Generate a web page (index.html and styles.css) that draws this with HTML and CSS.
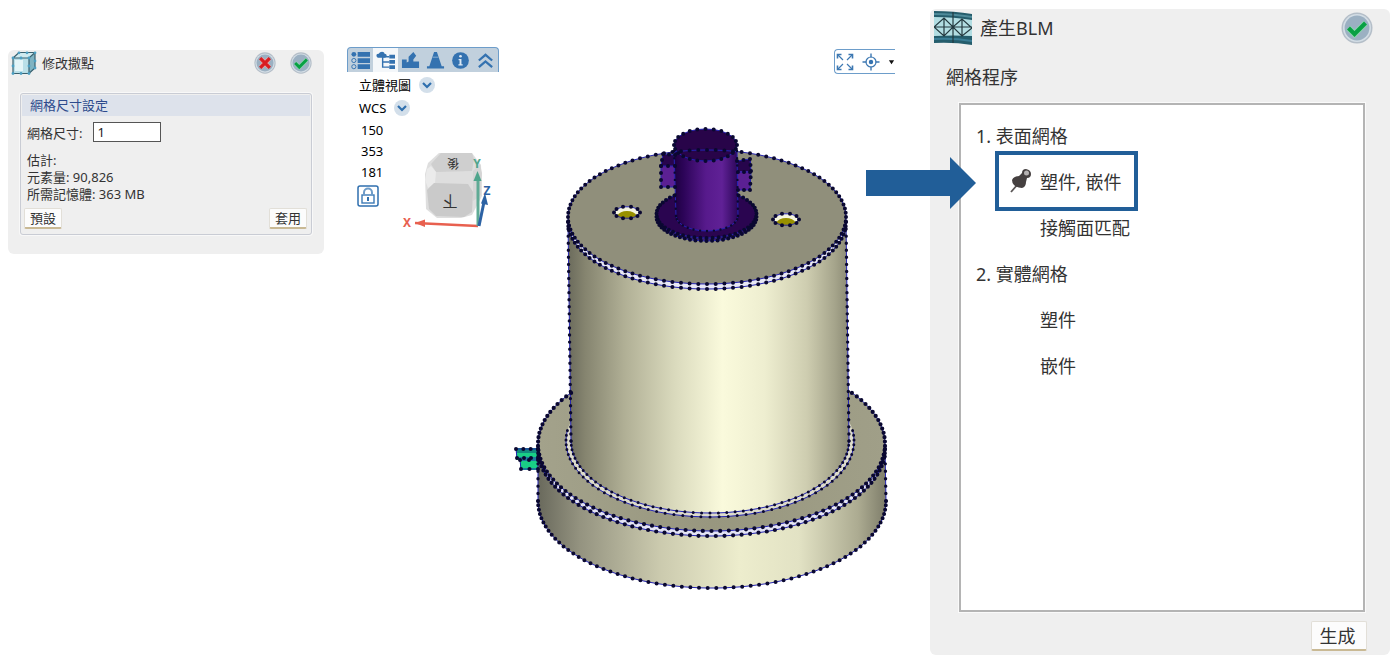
FILE: index.html
```html
<!DOCTYPE html>
<html lang="zh-Hant">
<head>
<meta charset="utf-8">
<title>產生BLM</title>
<link rel="stylesheet" href="styles.css">
</head>
<body>
<svg class="defs" aria-hidden="true">
  <defs>
    <symbol id="disc" viewBox="0 0 32 32">
      <circle cx="16" cy="16" r="15.5" fill="#b4bec8"/>
      <circle cx="16" cy="16" r="14" fill="#d3dde5"/>
      <circle cx="16" cy="16" r="12.4" fill="#9bb0c2"/>
    </symbol>
    <symbol id="ok" viewBox="0 0 32 32">
      <use href="#disc"/>
      <path d="M7.500 16l6 6 11-11" fill="none" stroke="#8fd8b0" stroke-width="6"/>
      <path d="M7.500 16l6 6 11-11" fill="none" stroke="#08a044" stroke-width="4.200"/>
    </symbol>
    <symbol id="cancel" viewBox="0 0 32 32">
      <use href="#disc"/>
      <path d="M10 10l12 12M22 10l-12 12" stroke="#eda5a5" stroke-width="6.500"/>
      <path d="M9 9l14 14M23 9l-14 14" stroke="#d91c22" stroke-width="4.800"/>
    </symbol>
    <symbol id="chevron" viewBox="0 0 16 16">
      <circle cx="8" cy="8" r="8" fill="#d3dfea"/>
      <path d="M4 6l4 4 4-4" fill="none" stroke="#2f6fae" stroke-width="2.200"/>
    </symbol>
  </defs>
</svg>

<main class="stage">
  <section class="panel seed">
    <header class="seed-head">
      <svg class="seed-icon" viewBox="0 0 26 24">
        <path d="M2 7L8 1.500H24V17L18 22.500H2Z" fill="#cfeaf0"/>
        <path d="M2 7h16v15.500H2z" fill="#b9dfe8"/>
        <path d="M4 9h8v11H4z" fill="#e4f5f8"/>
        <path d="M18 7l6-5.500V17l-6 5.500z" fill="#7fb3c2"/>
        <path d="M2 7L8 1.500H24V17L18 22.500H2V7H18L24 1.500M18 7V22.500" fill="none" stroke="#39606e" stroke-width="1.200"/>
        <g fill="#4c9fc2"><circle cx="2" cy="7" r="1.400"/><circle cx="10" cy="7" r="1.400"/><circle cx="18" cy="7" r="1.400"/><circle cx="8" cy="1.800" r="1.400"/><circle cx="16" cy="1.800" r="1.400"/><circle cx="24" cy="1.800" r="1.400"/><circle cx="2" cy="15" r="1.400"/><circle cx="2" cy="22.500" r="1.400"/><circle cx="10" cy="22.500" r="1.400"/><circle cx="18" cy="22.500" r="1.400"/><circle cx="24" cy="10" r="1.400"/><circle cx="24" cy="17" r="1.400"/><circle cx="18" cy="15" r="1.400"/></g>
      </svg>
      <h2 class="seed-title">修改撒點</h2>
      <button class="round" aria-label="取消"><svg viewBox="0 0 32 32"><use href="#cancel"/></svg></button>
      <button class="round" aria-label="確定"><svg viewBox="0 0 32 32"><use href="#ok"/></svg></button>
    </header>
    <div class="group">
      <h3 class="group-title">網格尺寸設定</h3>
      <div class="field">
        <label for="size">網格尺寸:</label>
        <input id="size" class="size" type="text" value="1">
      </div>
      <div class="estimate">
        <p>估計:</p>
        <p>元素量: 90,826</p>
        <p>所需記憶體: 363 MB</p>
      </div>
      <div class="group-actions">
        <button class="btn">預設</button>
        <button class="btn">套用</button>
      </div>
    </div>
  </section>

  <section class="viewport">
    <div class="side">
      <nav class="tabs">
        <button class="tab" aria-label="清單"><svg viewBox="0 0 20 20"><g fill="#3472b0"><path d="M7 1h13v5H7zM7 7.500h13v5H7zM7 14h13v5H7z"/><circle cx="3" cy="3.500" r="2.500"/></g><g fill="none" stroke="#3472b0"><circle cx="3" cy="10" r="2.200"/><circle cx="3" cy="16.500" r="2.200"/></g></svg></button>
        <button class="tab tab-on" aria-label="樹狀"><svg viewBox="0 0 20 20"><path d="M2 7c-3-2-1-5 1-4 1-3 6-3 6 0 3 0 3 4 0 4zM14 4h6v4h-6zM14 9.500h6v4h-6zM14 15h6v4h-6z" fill="#3472b0"/><path d="M7 5v12h7M7 11.500h7M7 6h7" fill="none" stroke="#3472b0" stroke-width="1.500"/></svg></button>
        <button class="tab" aria-label="零件"><svg viewBox="0 0 20 20"><path d="M1 18V9h5v3l2-1V6l5-5 3 4-3 4v2h6v7z" fill="#3472b0"/></svg></button>
        <button class="tab" aria-label="邊界"><svg viewBox="0 0 20 20"><path d="M8.500 1h3L16.500 16H19v2.500H1V16h2.500z" fill="#3472b0"/><path d="M7 6.500h6" stroke="#8db1d3" stroke-width="1"/></svg></button>
        <button class="tab" aria-label="資訊"><svg viewBox="0 0 20 20"><circle cx="10" cy="10" r="8.800" fill="#3472b0"/><circle cx="10" cy="5.500" r="1.400" fill="#dce8f3"/><path d="M8 8.500h3v5.500h1.300v1.300H7.800V14H9v-4.200H8z" fill="#dce8f3"/></svg></button>
        <button class="tab" aria-label="收合"><svg viewBox="0 0 20 20"><path d="M3 10l7-6 7 6M3 17l7-6 7 6" fill="none" stroke="#3472b0" stroke-width="2.400"/></svg></button>
      </nav>
      <button class="pick">立體視圖<svg viewBox="0 0 16 16"><use href="#chevron"/></svg></button>
      <button class="pick">WCS<svg viewBox="0 0 16 16"><use href="#chevron"/></svg></button>
      <div class="orient">
        <div class="angles">
          <span>150</span><span>353</span><span>181</span>
          <button class="lock" aria-label="鎖定"><svg viewBox="0 0 22 22"><rect x="1" y="1" width="20" height="20" rx="2" fill="#fff" stroke="#2f6fae" stroke-width="1.500"/><rect x="5" y="10" width="12" height="8" fill="none" stroke="#3c7ab6" stroke-width="1.400"/><path d="M7 10V7.500a4 4 0 0 1 8 0V10" fill="none" stroke="#6e9cc9" stroke-width="2"/><path d="M11 12v4" stroke="#2f6fae" stroke-width="2"/></svg></button>
        </div>
        <svg class="triad" viewBox="402 150 92 82">
          <path d="M439 154h33l9 12 1 31-10 19-11 3h-24l-11-9-1-35 3-11z" fill="#dedede"/>
          <path d="M441 154h31l2 6-2 12-36 1-5-8z" fill="#cfcfcf"/>
          <path d="M427 170l4-3 5 6-1 11-7 5-3-8z" fill="#ebebeb"/>
          <path d="M434 184l34 1 5 8-1 20-8 5-28-1-7-7-2-19z" fill="#cacaca"/>
          <path d="M473 172l7-7 2 9-1 22-8 6z" fill="#d5d5d5"/>
          <g class="face"><text x="-453" y="-160" transform="rotate(180)">後</text><text x="-450" y="-197" class="face-big" transform="rotate(180)">下</text></g>
          <path d="M478 227L415 224" stroke="#e8604f" stroke-width="2.400"/><path d="M415 224l10-3.500v7.500z" fill="#e8604f"/>
          <path d="M478 227V178" stroke="#5faa95" stroke-width="3"/><path d="M477.500 172l4 10h-8z" fill="#4fa58c"/>
          <path d="M479 227l5-24" stroke="#2c62a4" stroke-width="3"/><path d="M485 194l3 12-7-1.500z" fill="#2c62a4"/>
          <g class="axis"><text x="407" y="228" fill="#e8604f">X</text><text x="477" y="169" fill="#4fa58c">Y</text><text x="487" y="196" fill="#2c62a4">Z</text></g>
        </svg>
      </div>
    </div>
    <div class="scene">
      <div class="zoombar">
        <button class="tool" aria-label="全部顯示"><svg viewBox="0 0 18 18"><g fill="none" stroke="#3d78b2" stroke-width="1.200"><path d="M7 7L2 2M11 7l5-5M7 11l-5 5M11 11l5 5"/><path d="M1.500 5.500v-4h4M12.500 1.500h4v4M1.500 12.500v4h4M12.500 16.500h4v-4" stroke-width="1.600"/></g></svg></button>
        <button class="tool" aria-label="置中"><svg viewBox="0 0 18 18"><circle cx="9" cy="9" r="5" fill="none" stroke="#3d78b2" stroke-width="1.200"/><circle cx="9" cy="9" r="2.200" fill="#3472b0"/><path d="M9 0.500v4M9 13.500v4M0.500 9h4M13.500 9h4" stroke="#3d78b2" stroke-width="1.400"/></svg></button>
        <button class="tool tool-more" aria-label="更多"><svg viewBox="0 0 8 8"><path d="M0.500 1.500h7L4 7z" fill="#111"/></svg></button>
      </div>
      <svg class="model" viewBox="510 120 385 474">
        <defs>
          <linearGradient id="body"><stop offset="0" stop-color="#6b6b5c"/><stop offset=".06" stop-color="#85846f"/><stop offset=".2" stop-color="#b0af95"/><stop offset=".38" stop-color="#dadabd"/><stop offset=".55" stop-color="#fafadc"/><stop offset=".7" stop-color="#eeeed0"/><stop offset=".85" stop-color="#cecdb0"/><stop offset=".95" stop-color="#a5a48b"/><stop offset="1" stop-color="#8a8973"/></linearGradient>
          <linearGradient id="base"><stop offset="0" stop-color="#69695c"/><stop offset=".12" stop-color="#949380"/><stop offset=".35" stop-color="#cbcaae"/><stop offset=".58" stop-color="#ededcd"/><stop offset=".75" stop-color="#e2e2c4"/><stop offset=".92" stop-color="#acab91"/><stop offset="1" stop-color="#7e7d6a"/></linearGradient>
          <linearGradient id="rim"><stop offset="0" stop-color="#a3a28b"/><stop offset=".5" stop-color="#98977f"/><stop offset="1" stop-color="#a09f88"/></linearGradient>
          <linearGradient id="shaft"><stop offset="0" stop-color="#1d0040"/><stop offset=".15" stop-color="#2c0458"/><stop offset=".5" stop-color="#571a8c"/><stop offset=".75" stop-color="#602196"/><stop offset="1" stop-color="#2b0658"/></linearGradient>
        </defs>
        <path d="M516 447h24v12h-24zM520 459h20v10h-20z" fill="#19cf86"/>
        <path d="M516 447h24v5h-24z" fill="#128a7d"/>
        <path d="M538 443V500A174 87 0 0 0 886 500L885 443Z" fill="url(#base)"/>
        <path d="M538 448A173.500 87 0 0 0 885 448V443H538Z" fill="#e4e4f4"/>
        <ellipse cx="711.500" cy="443" rx="173.500" ry="87" fill="url(#rim)"/>
        <ellipse cx="710" cy="440" rx="144" ry="76" fill="#dddccb"/>
        <path d="M568 216L571 440A139 72 0 0 0 849 440L846 216Z" fill="url(#body)"/>
        <path d="M568 221A139 67 0 0 0 846 221V216H568Z" fill="#e8e8f4"/>
        <ellipse cx="707" cy="216" rx="139" ry="67" fill="#908f7b"/>
        <g><ellipse cx="627" cy="211.500" rx="13" ry="6" fill="#f5f5e0"/><path d="M617 215q3-5 10-5t10 5q-3 3-10 3t-10-3z" fill="#989000"/></g>
        <g><ellipse cx="786" cy="218.500" rx="13" ry="6" fill="#f5f5e0"/><path d="M776 222q3-5 10-5t10 5q-3 3-10 3t-10-3z" fill="#989000"/></g>
        <path d="M663 153l13 1v12h-15z" fill="#27054c"/><path d="M661 165h15v21h-15z" fill="#5b2093"/>
        <path d="M736 160l15-2v13h-16z" fill="#27054c"/><path d="M735 170h15v19h-15z" fill="#5b2093"/>
        <ellipse cx="706.500" cy="216" rx="50" ry="24" fill="#37206c"/>
        <ellipse cx="706.500" cy="213" rx="50" ry="24" fill="#2a0550"/>
        <path d="M674 144L676 215A31 15 0 0 0 738 215L737 144Z" fill="url(#shaft)"/>
        <ellipse cx="705.500" cy="144" rx="31.500" ry="16" fill="#280449"/>
        <g id="edges" class="edges"></g>
        <g id="nodes" class="nodes"></g>
      </svg>
    </div>
  </section>

  <section class="panel blm">
    <header class="blm-head">
      <svg class="blm-icon" viewBox="0 0 38 34">
        <path d="M0 0Q20 0 38 3V34Q20 31 0 32Z" fill="#255d6c"/>
        <path d="M0 6Q20 6 38 9V25Q20 24 0 25Z" fill="#b2dde2"/>
        <path d="M0 3Q20 3 38 6" stroke="#4f8b9a" stroke-width="2" fill="none"/>
        <path d="M0 28Q20 27 38 30" stroke="#3b7e96" stroke-width="2" fill="none"/>
        <path d="M0 16h38M10 7v18M19 1v31M28 8v17M0 16L10 7 19 16 28 8 38 17 28 25 19 16 10 25Z" fill="none" stroke="#24393f" stroke-width="1.200"/>
      </svg>
      <h1 class="blm-title">產生BLM</h1>
      <button class="round round-big" aria-label="確定"><svg viewBox="0 0 32 32"><use href="#ok"/></svg></button>
    </header>
    <h2 class="blm-label">網格程序</h2>
    <ol class="steps">
      <li class="row">1. 表面網格</li>
      <li class="row sub current">
        <svg class="pin" viewBox="0 0 22 24"><path d="M1 23l7-8" stroke="#5a5555" stroke-width="1.800"/><path d="M2 11q2-4 7-4l3-3q0-4 4-4 5 1 5 5t-4 4l-1 4q0 5-4 6-5 0-8-3-2-2-2-5z" fill="#454040"/><circle cx="16.500" cy="4" r="2.500" fill="#b5b2b2"/></svg>
        塑件, 嵌件
      </li>
      <li class="row sub">接觸面匹配</li>
      <li class="row">2. 實體網格</li>
      <li class="row sub">塑件</li>
      <li class="row sub">嵌件</li>
    </ol>
    <button class="btn btn-big">生成</button>
    <svg class="arrow" viewBox="0 0 110 52"><path d="M0 13h84V0l26 26-26 26V39H0z" fill="#215e98"/></svg>
  </section>
</main>
<script src="model.js"></script>
</body>
</html>
```

FILE: styles.css
```css
* { box-sizing: border-box; }

body {
  margin: 0;
  background: #fff;
  color: #333;
  font-family: "Noto Sans", "Noto Sans CJK TC", sans-serif;
  font-size: 13px;
}

h1, h2, h3, p, ol { margin: 0; padding: 0; font-weight: 400; }

button {
  padding: 0;
  border: 0;
  background: none;
  color: inherit;
  font: inherit;
}

svg { display: block; }
.defs { position: absolute; width: 0; height: 0; }

.stage {
  display: grid;
  grid-template-columns: 316px minmax(0, 1fr) 460px;
  gap: 23px;
  min-height: 100vh;
  padding: 9px 10px 10px 8px;
}

.panel { background: #efefef; border-radius: 6px; }

.round { width: 22px; height: 22px; }
.round-big { width: 32px; height: 32px; }

.btn {
  min-width: 38px;
  height: 21px;
  padding: 0 5px;
  border: 1px solid #e2dfd8;
  border-bottom: 2px solid #c9b994;
  border-radius: 2px;
  background: #fcfcfc;
  line-height: 18px;
}

/* Seed size panel */
.seed { align-self: start; margin-top: 41px; padding: 1px 12px 19px; }
.seed-head { display: flex; align-items: center; gap: 14px; height: 24px; margin-left: -9px; }
.seed-icon { width: 26px; height: 24px; }
.seed-title { flex: 1; margin-left: -9px; font-size: 13px; line-height: 24px; }

.group {
  margin-top: 18px;
  padding: 1px;
  border: 1px solid #c9ccd4;
  border-radius: 3px;
  box-shadow: 0 0 0 1px #f8f8f8;
}
.group-title {
  padding-left: 8px;
  background: #dde2eb;
  color: #2c4a8c;
  font-size: 13px;
  line-height: 21px;
}
.field { display: flex; align-items: center; gap: 11px; height: 32px; padding-left: 5px; }
.size {
  width: 68px;
  height: 20px;
  padding: 0 3px;
  border: 1px solid #555;
  background: #fff;
  color: #222;
  font: inherit;
}
.estimate { padding: 4px 5px; line-height: 17px; }
.group-actions { display: flex; justify-content: space-between; padding: 1px 3px 4px 2px; }

/* 3D viewport */
.viewport {
  display: grid;
  grid-template-columns: 152px minmax(0, 1fr);
  gap: 11px;
  align-content: start;
  padding: 38px 12px 0 0;
}
.tabs {
  display: flex;
  height: 25px;
  margin-bottom: 1px;
  border: 1px solid #6d9dca;
  border-bottom: 0;
  border-radius: 4px 4px 0 0;
  background: #c1d0dd;
}
.tab { display: flex; flex: 1; align-items: center; justify-content: center; }
.tab svg { width: 19px; height: 19px; }
.tab-on { background: #f4f7fa; }

.pick {
  display: flex;
  align-items: center;
  gap: 8px;
  height: 23px;
  padding-left: 12px;
  color: #000;
}
.pick svg { width: 16px; height: 16px; }

.orient { display: flex; gap: 19px; padding: 1px 0 0 10px; color: #000; }
.angles { display: flex; flex-direction: column; line-height: 21px; }
.angles span { padding-left: 4px; }
.lock { width: 22px; height: 22px; margin-top: 2px; }
.triad { width: 92px; height: 82px; margin-top: 29px; }
.face { fill: #333; font-size: 12px; text-anchor: middle; }
.face-big { font-size: 15px; }
.axis { font-size: 12px; font-weight: 700; text-anchor: middle; }

.scene { display: flex; flex-direction: column; margin-top: 2px; }
.zoombar {
  display: flex;
  align-self: flex-end;
  align-items: center;
  gap: 8px;
  height: 25px;
  padding-left: 1px;
  border: 1px solid #6d9dca;
  border-right: 0;
  border-radius: 4px 0 0 4px;
}
.tool svg { width: 18px; height: 18px; }
.tool-more svg { width: 7px; height: 6px; }
.model { width: 100%; margin-top: 47px; }
.edges { fill: none; stroke: #2424b4; stroke-width: 1; }
.nodes { fill: none; stroke: #0a0830; stroke-width: 4; stroke-linecap: round; }

/* Mesh procedure panel */
.blm {
  position: relative;
  display: flex;
  flex-direction: column;
  padding: 1px 17px 4px 4px;
  font-size: 18px;
}
.blm-head { display: flex; align-items: center; gap: 8px; height: 35px; }
.blm-icon { width: 38px; height: 34px; }
.blm-title { flex: 1; font-size: 18px; line-height: 34px; }
.blm-label { padding: 18px 12px 12px; font-size: 18px; line-height: 28px; }
.steps {
  flex: 1;
  margin: 0 8px 9px 25px;
  padding: 7px 15px;
  border: 2px solid #b4b4b4;
  outline: 1px solid #fafafa;
  background: #fff;
  list-style: none;
}
.row { display: flex; align-items: center; height: 46px; }
.sub { padding-left: 64px; }
.current {
  gap: 8px;
  width: 143px;
  height: 60px;
  margin: -7px 0 -7px 19px;
  padding-left: 11px;
  border: 4px solid #215e98;
  white-space: nowrap;
}
.pin { flex: none; width: 22px; height: 24px; }
.btn-big {
  align-self: flex-end;
  min-width: 56px;
  height: 30px;
  margin-right: 6px;
  padding: 0 8px 0 5px;
  line-height: 26px;
}
.arrow { position: absolute; top: 148px; left: -64px; width: 110px; height: 52px; }
```

FILE: model.js
```js
const edges = document.getElementById("edges");
const nodes = document.getElementById("nodes");

function draw(parent, d, width) {
  const path = document.createElementNS("http://www.w3.org/2000/svg", "path");
  path.setAttribute("d", d);
  if (width) path.style.strokeWidth = width;
  parent.appendChild(path);
}

// Elliptical edge with mesh nodes at equal angles; 0 is right, 90 is the front.
function ring(cx, cy, rx, ry, count, from, to, size) {
  let line = "";
  let dots = "";
  for (let i = 0; i <= count; i++) {
    const a = (from + (to - from) * i / count) * Math.PI / 180;
    const p = (cx + rx * Math.cos(a)).toFixed(1) + " " + (cy + ry * Math.sin(a)).toFixed(1);
    line += (i ? "L" : "M") + p;
    dots += "M" + p + "h0";
  }
  draw(edges, line);
  draw(nodes, dots, size);
}

// Straight edges through a list of points, with nodes about one step apart.
function line(points, step, size) {
  let dots = "";
  for (let i = 1; i < points.length; i++) {
    const [x1, y1] = points[i - 1];
    const [x2, y2] = points[i];
    const n = Math.max(1, Math.round(Math.hypot(x2 - x1, y2 - y1) / step));
    for (let k = 0; k <= n; k++) {
      dots += "M" + (x1 + (x2 - x1) * k / n) + " " + (y1 + (y2 - y1) * k / n) + "h0";
    }
  }
  draw(edges, "M" + points.join("L"));
  draw(nodes, dots, size);
}

// Base
ring(711.5, 443, 173.5, 87, 88, -36, 216, 4.2);
ring(711.5, 448, 173.5, 87, 63, 0, 180, 4.2);
ring(712, 500, 174, 87, 63, 0, 180, 4);
line([[538, 448], [538, 500]], 7, 3.4);
line([[885, 448], [886, 500]], 7, 3.4);

// Body
ring(710, 440, 139, 72, 52, 0, 180, 3);
ring(710, 440, 144, 76, 54, -8, 188, 3);
ring(707, 216, 139, 67, 100, 0, 360, 4);
ring(707, 221, 139, 67, 50, 0, 180, 4);
line([[568, 221], [571, 440]], 7, 3.4);
line([[846, 221], [849, 440]], 7, 3.4);

// Holes
ring(627, 211.5, 13, 6, 10, 0, 360, 4);
ring(786, 218.5, 13, 6, 10, 0, 360, 4);

// Insert
ring(706.5, 213, 50, 24, 40, -50, 230, 4);
ring(706.5, 216, 50, 24, 28, 0, 180, 4);
ring(707, 215, 31, 15, 14, 0, 180, 2.4);
ring(705.5, 144, 31.5, 16, 24, 0, 360, 4);
line([[674, 150], [676, 215]], 7, 2.4);
line([[737, 150], [738, 215]], 7, 2.4);
line([[675, 154], [663, 153], [661, 165], [661, 186], [675, 186]], 7, 4);
line([[661, 165], [675, 165]], 7, 4);
line([[737, 160], [750, 158], [751, 170], [750, 189], [738, 189]], 7, 4);
line([[738, 171], [750, 171]], 7, 4);

// Gate
line([[538, 448], [516, 448], [517, 457], [538, 457]], 8, 4);
line([[538, 459], [520, 459], [521, 468], [538, 468]], 8, 4);
```
